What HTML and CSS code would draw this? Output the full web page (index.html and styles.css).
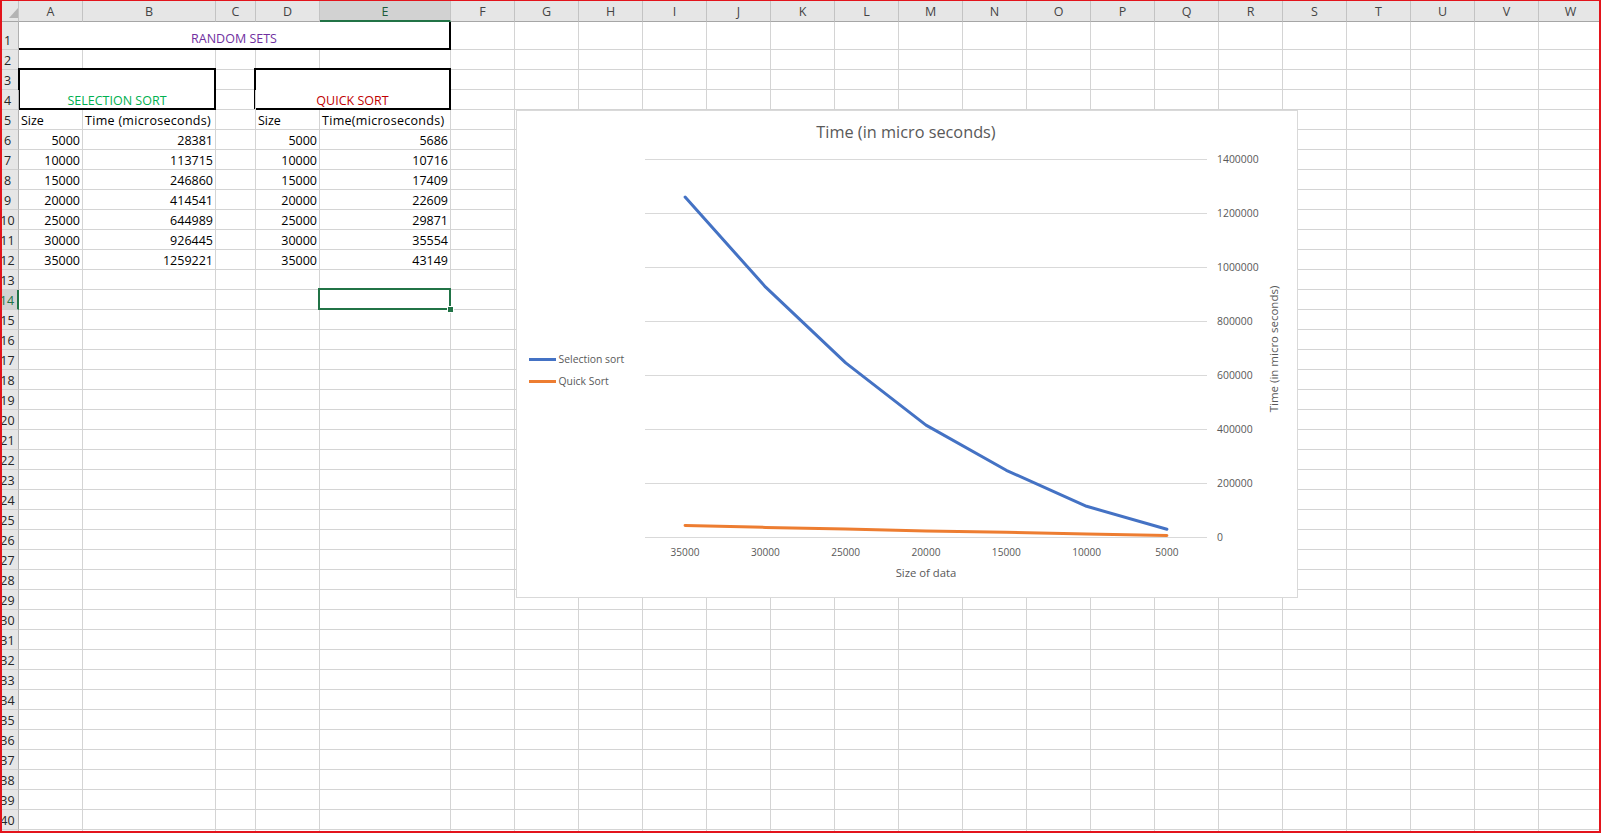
FILE: index.html
```html
<!DOCTYPE html>
<html lang="en">
<head>
<meta charset="utf-8">
<title>Sorting times</title>
<link rel="stylesheet" href="styles.css">
</head>
<body>
<div class="frame">
<div class="sheet">
<b class="corner"></b><b class="ch">A</b><b class="ch">B</b><b class="ch">C</b><b class="ch">D</b><b class="ch on">E</b><b class="ch">F</b><b class="ch">G</b><b class="ch">H</b><b class="ch">I</b><b class="ch">J</b><b class="ch">K</b><b class="ch">L</b><b class="ch">M</b><b class="ch">N</b><b class="ch">O</b><b class="ch">P</b><b class="ch">Q</b><b class="ch">R</b><b class="ch">S</b><b class="ch">T</b><b class="ch">U</b><b class="ch">V</b><b class="ch">W</b>
<b class="rh">1</b><span class="title">RANDOM SETS</span><i></i><i></i><i></i><i></i><i></i><i></i><i></i><i></i><i></i><i></i><i></i><i></i><i></i><i></i><i></i><i></i><i></i><i></i>
<b class="rh">2</b><i></i><i></i><i></i><i></i><i></i><i></i><i></i><i></i><i></i><i></i><i></i><i></i><i></i><i></i><i></i><i></i><i></i><i></i><i></i><i></i><i></i><i></i><i></i>
<b class="rh">3</b><span class="box sel">SELECTION SORT</span><i></i><span class="box qs">QUICK SORT</span><i></i><i></i><i></i><i></i><i></i><i></i><i></i><i></i><i></i><i></i><i></i><i></i><i></i><i></i><i></i><i></i><i></i><i></i>
<b class="rh">4</b><i></i><i></i><i></i><i></i><i></i><i></i><i></i><i></i><i></i><i></i><i></i><i></i><i></i><i></i><i></i><i></i><i></i><i></i><i></i>
<b class="rh">5</b><span>Size</span><span class="wide">Time (microseconds)</span><i></i><span>Size</span><span class="wide">Time(microseconds)</span><i></i><i></i><i></i><i></i><i></i><i></i><i></i><i></i><i></i><i></i><i></i><i></i><i></i><i></i><i></i><i></i><i></i><i></i>
<b class="rh">6</b><span class="num">5000</span><span class="num">28381</span><i></i><span class="num">5000</span><span class="num">5686</span><i></i><i></i><i></i><i></i><i></i><i></i><i></i><i></i><i></i><i></i><i></i><i></i><i></i><i></i><i></i><i></i><i></i><i></i>
<b class="rh">7</b><span class="num">10000</span><span class="num">113715</span><i></i><span class="num">10000</span><span class="num">10716</span><i></i><i></i><i></i><i></i><i></i><i></i><i></i><i></i><i></i><i></i><i></i><i></i><i></i><i></i><i></i><i></i><i></i><i></i>
<b class="rh">8</b><span class="num">15000</span><span class="num">246860</span><i></i><span class="num">15000</span><span class="num">17409</span><i></i><i></i><i></i><i></i><i></i><i></i><i></i><i></i><i></i><i></i><i></i><i></i><i></i><i></i><i></i><i></i><i></i><i></i>
<b class="rh">9</b><span class="num">20000</span><span class="num">414541</span><i></i><span class="num">20000</span><span class="num">22609</span><i></i><i></i><i></i><i></i><i></i><i></i><i></i><i></i><i></i><i></i><i></i><i></i><i></i><i></i><i></i><i></i><i></i><i></i>
<b class="rh">10</b><span class="num">25000</span><span class="num">644989</span><i></i><span class="num">25000</span><span class="num">29871</span><i></i><i></i><i></i><i></i><i></i><i></i><i></i><i></i><i></i><i></i><i></i><i></i><i></i><i></i><i></i><i></i><i></i><i></i>
<b class="rh">11</b><span class="num">30000</span><span class="num">926445</span><i></i><span class="num">30000</span><span class="num">35554</span><i></i><i></i><i></i><i></i><i></i><i></i><i></i><i></i><i></i><i></i><i></i><i></i><i></i><i></i><i></i><i></i><i></i><i></i>
<b class="rh">12</b><span class="num">35000</span><span class="num">1259221</span><i></i><span class="num">35000</span><span class="num">43149</span><i></i><i></i><i></i><i></i><i></i><i></i><i></i><i></i><i></i><i></i><i></i><i></i><i></i><i></i><i></i><i></i><i></i><i></i>
<b class="rh">13</b><i></i><i></i><i></i><i></i><i></i><i></i><i></i><i></i><i></i><i></i><i></i><i></i><i></i><i></i><i></i><i></i><i></i><i></i><i></i><i></i><i></i><i></i><i></i>
<b class="rh on">14</b><i></i><i></i><i></i><i></i><i class="active"></i><i></i><i></i><i></i><i></i><i></i><i></i><i></i><i></i><i></i><i></i><i></i><i></i><i></i><i></i><i></i><i></i><i></i><i></i>
<b class="rh">15</b><i></i><i></i><i></i><i></i><i></i><i></i><i></i><i></i><i></i><i></i><i></i><i></i><i></i><i></i><i></i><i></i><i></i><i></i><i></i><i></i><i></i><i></i><i></i>
<b class="rh">16</b><i></i><i></i><i></i><i></i><i></i><i></i><i></i><i></i><i></i><i></i><i></i><i></i><i></i><i></i><i></i><i></i><i></i><i></i><i></i><i></i><i></i><i></i><i></i>
<b class="rh">17</b><i></i><i></i><i></i><i></i><i></i><i></i><i></i><i></i><i></i><i></i><i></i><i></i><i></i><i></i><i></i><i></i><i></i><i></i><i></i><i></i><i></i><i></i><i></i>
<b class="rh">18</b><i></i><i></i><i></i><i></i><i></i><i></i><i></i><i></i><i></i><i></i><i></i><i></i><i></i><i></i><i></i><i></i><i></i><i></i><i></i><i></i><i></i><i></i><i></i>
<b class="rh">19</b><i></i><i></i><i></i><i></i><i></i><i></i><i></i><i></i><i></i><i></i><i></i><i></i><i></i><i></i><i></i><i></i><i></i><i></i><i></i><i></i><i></i><i></i><i></i>
<b class="rh">20</b><i></i><i></i><i></i><i></i><i></i><i></i><i></i><i></i><i></i><i></i><i></i><i></i><i></i><i></i><i></i><i></i><i></i><i></i><i></i><i></i><i></i><i></i><i></i>
<b class="rh">21</b><i></i><i></i><i></i><i></i><i></i><i></i><i></i><i></i><i></i><i></i><i></i><i></i><i></i><i></i><i></i><i></i><i></i><i></i><i></i><i></i><i></i><i></i><i></i>
<b class="rh">22</b><i></i><i></i><i></i><i></i><i></i><i></i><i></i><i></i><i></i><i></i><i></i><i></i><i></i><i></i><i></i><i></i><i></i><i></i><i></i><i></i><i></i><i></i><i></i>
<b class="rh">23</b><i></i><i></i><i></i><i></i><i></i><i></i><i></i><i></i><i></i><i></i><i></i><i></i><i></i><i></i><i></i><i></i><i></i><i></i><i></i><i></i><i></i><i></i><i></i>
<b class="rh">24</b><i></i><i></i><i></i><i></i><i></i><i></i><i></i><i></i><i></i><i></i><i></i><i></i><i></i><i></i><i></i><i></i><i></i><i></i><i></i><i></i><i></i><i></i><i></i>
<b class="rh">25</b><i></i><i></i><i></i><i></i><i></i><i></i><i></i><i></i><i></i><i></i><i></i><i></i><i></i><i></i><i></i><i></i><i></i><i></i><i></i><i></i><i></i><i></i><i></i>
<b class="rh">26</b><i></i><i></i><i></i><i></i><i></i><i></i><i></i><i></i><i></i><i></i><i></i><i></i><i></i><i></i><i></i><i></i><i></i><i></i><i></i><i></i><i></i><i></i><i></i>
<b class="rh">27</b><i></i><i></i><i></i><i></i><i></i><i></i><i></i><i></i><i></i><i></i><i></i><i></i><i></i><i></i><i></i><i></i><i></i><i></i><i></i><i></i><i></i><i></i><i></i>
<b class="rh">28</b><i></i><i></i><i></i><i></i><i></i><i></i><i></i><i></i><i></i><i></i><i></i><i></i><i></i><i></i><i></i><i></i><i></i><i></i><i></i><i></i><i></i><i></i><i></i>
<b class="rh">29</b><i></i><i></i><i></i><i></i><i></i><i></i><i></i><i></i><i></i><i></i><i></i><i></i><i></i><i></i><i></i><i></i><i></i><i></i><i></i><i></i><i></i><i></i><i></i>
<b class="rh">30</b><i></i><i></i><i></i><i></i><i></i><i></i><i></i><i></i><i></i><i></i><i></i><i></i><i></i><i></i><i></i><i></i><i></i><i></i><i></i><i></i><i></i><i></i><i></i>
<b class="rh">31</b><i></i><i></i><i></i><i></i><i></i><i></i><i></i><i></i><i></i><i></i><i></i><i></i><i></i><i></i><i></i><i></i><i></i><i></i><i></i><i></i><i></i><i></i><i></i>
<b class="rh">32</b><i></i><i></i><i></i><i></i><i></i><i></i><i></i><i></i><i></i><i></i><i></i><i></i><i></i><i></i><i></i><i></i><i></i><i></i><i></i><i></i><i></i><i></i><i></i>
<b class="rh">33</b><i></i><i></i><i></i><i></i><i></i><i></i><i></i><i></i><i></i><i></i><i></i><i></i><i></i><i></i><i></i><i></i><i></i><i></i><i></i><i></i><i></i><i></i><i></i>
<b class="rh">34</b><i></i><i></i><i></i><i></i><i></i><i></i><i></i><i></i><i></i><i></i><i></i><i></i><i></i><i></i><i></i><i></i><i></i><i></i><i></i><i></i><i></i><i></i><i></i>
<b class="rh">35</b><i></i><i></i><i></i><i></i><i></i><i></i><i></i><i></i><i></i><i></i><i></i><i></i><i></i><i></i><i></i><i></i><i></i><i></i><i></i><i></i><i></i><i></i><i></i>
<b class="rh">36</b><i></i><i></i><i></i><i></i><i></i><i></i><i></i><i></i><i></i><i></i><i></i><i></i><i></i><i></i><i></i><i></i><i></i><i></i><i></i><i></i><i></i><i></i><i></i>
<b class="rh">37</b><i></i><i></i><i></i><i></i><i></i><i></i><i></i><i></i><i></i><i></i><i></i><i></i><i></i><i></i><i></i><i></i><i></i><i></i><i></i><i></i><i></i><i></i><i></i>
<b class="rh">38</b><i></i><i></i><i></i><i></i><i></i><i></i><i></i><i></i><i></i><i></i><i></i><i></i><i></i><i></i><i></i><i></i><i></i><i></i><i></i><i></i><i></i><i></i><i></i>
<b class="rh">39</b><i></i><i></i><i></i><i></i><i></i><i></i><i></i><i></i><i></i><i></i><i></i><i></i><i></i><i></i><i></i><i></i><i></i><i></i><i></i><i></i><i></i><i></i><i></i>
<b class="rh">40</b><i></i><i></i><i></i><i></i><i></i><i></i><i></i><i></i><i></i><i></i><i></i><i></i><i></i><i></i><i></i><i></i><i></i><i></i><i></i><i></i><i></i><i></i><i></i>
<b class="rh"></b><i></i><i></i><i></i><i></i><i></i><i></i><i></i><i></i><i></i><i></i><i></i><i></i><i></i><i></i><i></i><i></i><i></i><i></i><i></i><i></i><i></i><i></i><i></i>
</div>

<div class="chart">
<svg width="782" height="488" viewBox="516 110 782 488" xmlns="http://www.w3.org/2000/svg">
  <rect class="chart-bg" x="516.5" y="110.5" width="781" height="487"/>
  <text class="c-title" x="906" y="137.5" text-anchor="middle">Time (in micro seconds)</text>
  <g class="grid">
    <line x1="645" y1="159.5" x2="1207" y2="159.5"/>
    <line x1="645" y1="213.5" x2="1207" y2="213.5"/>
    <line x1="645" y1="267.5" x2="1207" y2="267.5"/>
    <line x1="645" y1="321.5" x2="1207" y2="321.5"/>
    <line x1="645" y1="375.5" x2="1207" y2="375.5"/>
    <line x1="645" y1="429.5" x2="1207" y2="429.5"/>
    <line x1="645" y1="483.5" x2="1207" y2="483.5"/>
    <line x1="645" y1="537.5" x2="1207" y2="537.5"/>
  </g>
  <g class="ylab">
    <text x="1217" y="163.3">1400000</text>
    <text x="1217" y="217.3">1200000</text>
    <text x="1217" y="271.3">1000000</text>
    <text x="1217" y="325.3">800000</text>
    <text x="1217" y="379.3">600000</text>
    <text x="1217" y="433.3">400000</text>
    <text x="1217" y="487.3">200000</text>
    <text x="1217" y="541.3">0</text>
  </g>
  <g class="xlab">
    <text x="685" y="556.4">35000</text>
    <text x="765.4" y="556.4">30000</text>
    <text x="845.7" y="556.4">25000</text>
    <text x="926" y="556.4">20000</text>
    <text x="1006.3" y="556.4">15000</text>
    <text x="1086.6" y="556.4">10000</text>
    <text x="1166.9" y="556.4">5000</text>
  </g>
  <text class="x-title" x="926" y="576.8" text-anchor="middle">Size of data</text>
  <text class="y-title" x="1273" y="349" text-anchor="middle" dominant-baseline="central" transform="rotate(-90 1273 349)">Time (in micro seconds)</text>
  <polyline class="s-quick" points="685.1,525.4 765.4,527.4 845.7,528.9 926,530.9 1006.3,532.3 1086.6,534.1 1166.9,535.5"/>
  <polyline class="s-sel" points="685.1,197 765.4,286.9 845.7,362.9 926,425.1 1006.3,470.3 1086.6,506.3 1166.9,529.3"/>
  <line class="s-sel" x1="529" y1="359.5" x2="556" y2="359.5"/>
  <text class="legend" x="558.5" y="362.6">Selection sort</text>
  <line class="s-quick" x1="529" y1="381.5" x2="556" y2="381.5"/>
  <text class="legend" x="558.5" y="384.6">Quick Sort</text>
</svg>
</div>
</div>
</body>
</html>
```

FILE: styles.css
```css
html, body {
  margin: 0;
  padding: 0;
}

body {
  width: 1601px;
  height: 833px;
  overflow: hidden;
  background: #fff;
  font-family: "Open Sans", "Liberation Sans", sans-serif;
  font-size: 12.5px;
}

.frame {
  position: relative;
  width: 1601px;
  height: 833px;
  box-sizing: border-box;
  border: 2px solid #e3141c;
  border-top-width: 1px;
  overflow: hidden;
}

.sheet {
  display: grid;
  grid-template-columns: 17px 64px 133px 40px 64px 131px repeat(18, 64px);
  grid-template-rows: 21px 28px repeat(40, 20px);
}

.sheet > * {
  box-sizing: border-box;
  display: flex;
  align-items: flex-end;
  min-width: 0;
  padding: 0 2px 1px 2px;
  border-right: 1px solid #d4d4d4;
  border-bottom: 1px solid #d4d4d4;
  line-height: 14px;
  white-space: nowrap;
  font-style: normal;
  font-weight: normal;
  color: #000;
}

.sheet > .num {
  justify-content: flex-end;
}

.sheet > .wide {
  letter-spacing: 0.3px;
}

/* column headers */
.sheet > .corner,
.sheet > .ch {
  background: #e6e6e6;
  border-right-color: #c3c3c3;
  border-bottom-color: #a6a6a6;
}

.sheet > .ch {
  justify-content: center;
  align-items: center;
  padding: 2px 0 0;
  color: #444;
}

.sheet > .ch.on {
  background: #d2d2d2;
  color: #1d5b3a;
  border-bottom: 2px solid #217346;
}

.sheet > .corner {
  position: relative;
}

.corner::after {
  content: "";
  position: absolute;
  right: 0;
  bottom: 3px;
  width: 9px;
  height: 10px;
  background: #b4b4b4;
  clip-path: polygon(100% 0, 100% 100%, 0 100%);
}

/* row headers */
.sheet > .rh {
  background: #e6e6e6;
  border-right-color: #b1b1b1;
  border-bottom-color: #cfcfcf;
  justify-content: center;
  padding: 0 5px 1px 0;
  color: #262626;
}

.sheet > .rh.on {
  background: #d2d2d2;
  color: #217346;
  border-right: 2px solid #217346;
}

/* merged and bordered cells */
.sheet > .title {
  grid-column: span 5;
  justify-content: center;
  padding-bottom: 2px;
  color: #7030a0;
  border-right: 2px solid #000;
  border-bottom: 2px solid #000;
}

.sheet > .box {
  grid-column: span 2;
  grid-row: span 2;
  justify-content: center;
  margin-top: -2px;
  padding-bottom: 0;
  border: 2px solid #000;
}

.sheet > .box.sel {
  margin-left: -1px;
  color: #00b050;
}

.sheet > .box.qs {
  margin-left: -2px;
  color: #c00000;
}

/* active cell */
.sheet > .active {
  position: relative;
}

.active::before {
  content: "";
  position: absolute;
  z-index: 2;
  top: -2px;
  left: -2px;
  right: -1px;
  bottom: -1px;
  border: 2px solid #217346;
}

.active::after {
  content: "";
  position: absolute;
  z-index: 3;
  right: -4px;
  bottom: -4px;
  width: 5px;
  height: 5px;
  background: #217346;
  border: 1px solid #fff;
}

/* chart */
.chart {
  position: absolute;
  left: 514px;
  top: 109px;
  width: 782px;
  height: 488px;
  z-index: 5;
}

.chart svg {
  display: block;
  font-family: "Open Sans", "Liberation Sans", sans-serif;
}

.chart-bg {
  fill: #fff;
  stroke: #d9d9d9;
  stroke-width: 1;
}

.c-title {
  font-size: 16.3px;
  fill: #595959;
}

.grid line {
  stroke: #d9d9d9;
  stroke-width: 1;
}

.ylab text {
  font-size: 10.4px;
  fill: #595959;
}

.xlab text {
  font-size: 10.1px;
  fill: #595959;
  text-anchor: middle;
}

.x-title {
  font-size: 11.3px;
  fill: #595959;
}

.y-title {
  font-size: 11.5px;
  fill: #595959;
}

.legend {
  font-size: 10.4px;
  fill: #595959;
}

.s-sel,
.s-quick {
  fill: none;
  stroke-width: 3;
  stroke-linejoin: round;
  stroke-linecap: round;
}

.s-sel {
  stroke: #4472c4;
}

.s-quick {
  stroke: #ed7d31;
}

line.s-sel,
line.s-quick {
  stroke-linecap: butt;
}
```
